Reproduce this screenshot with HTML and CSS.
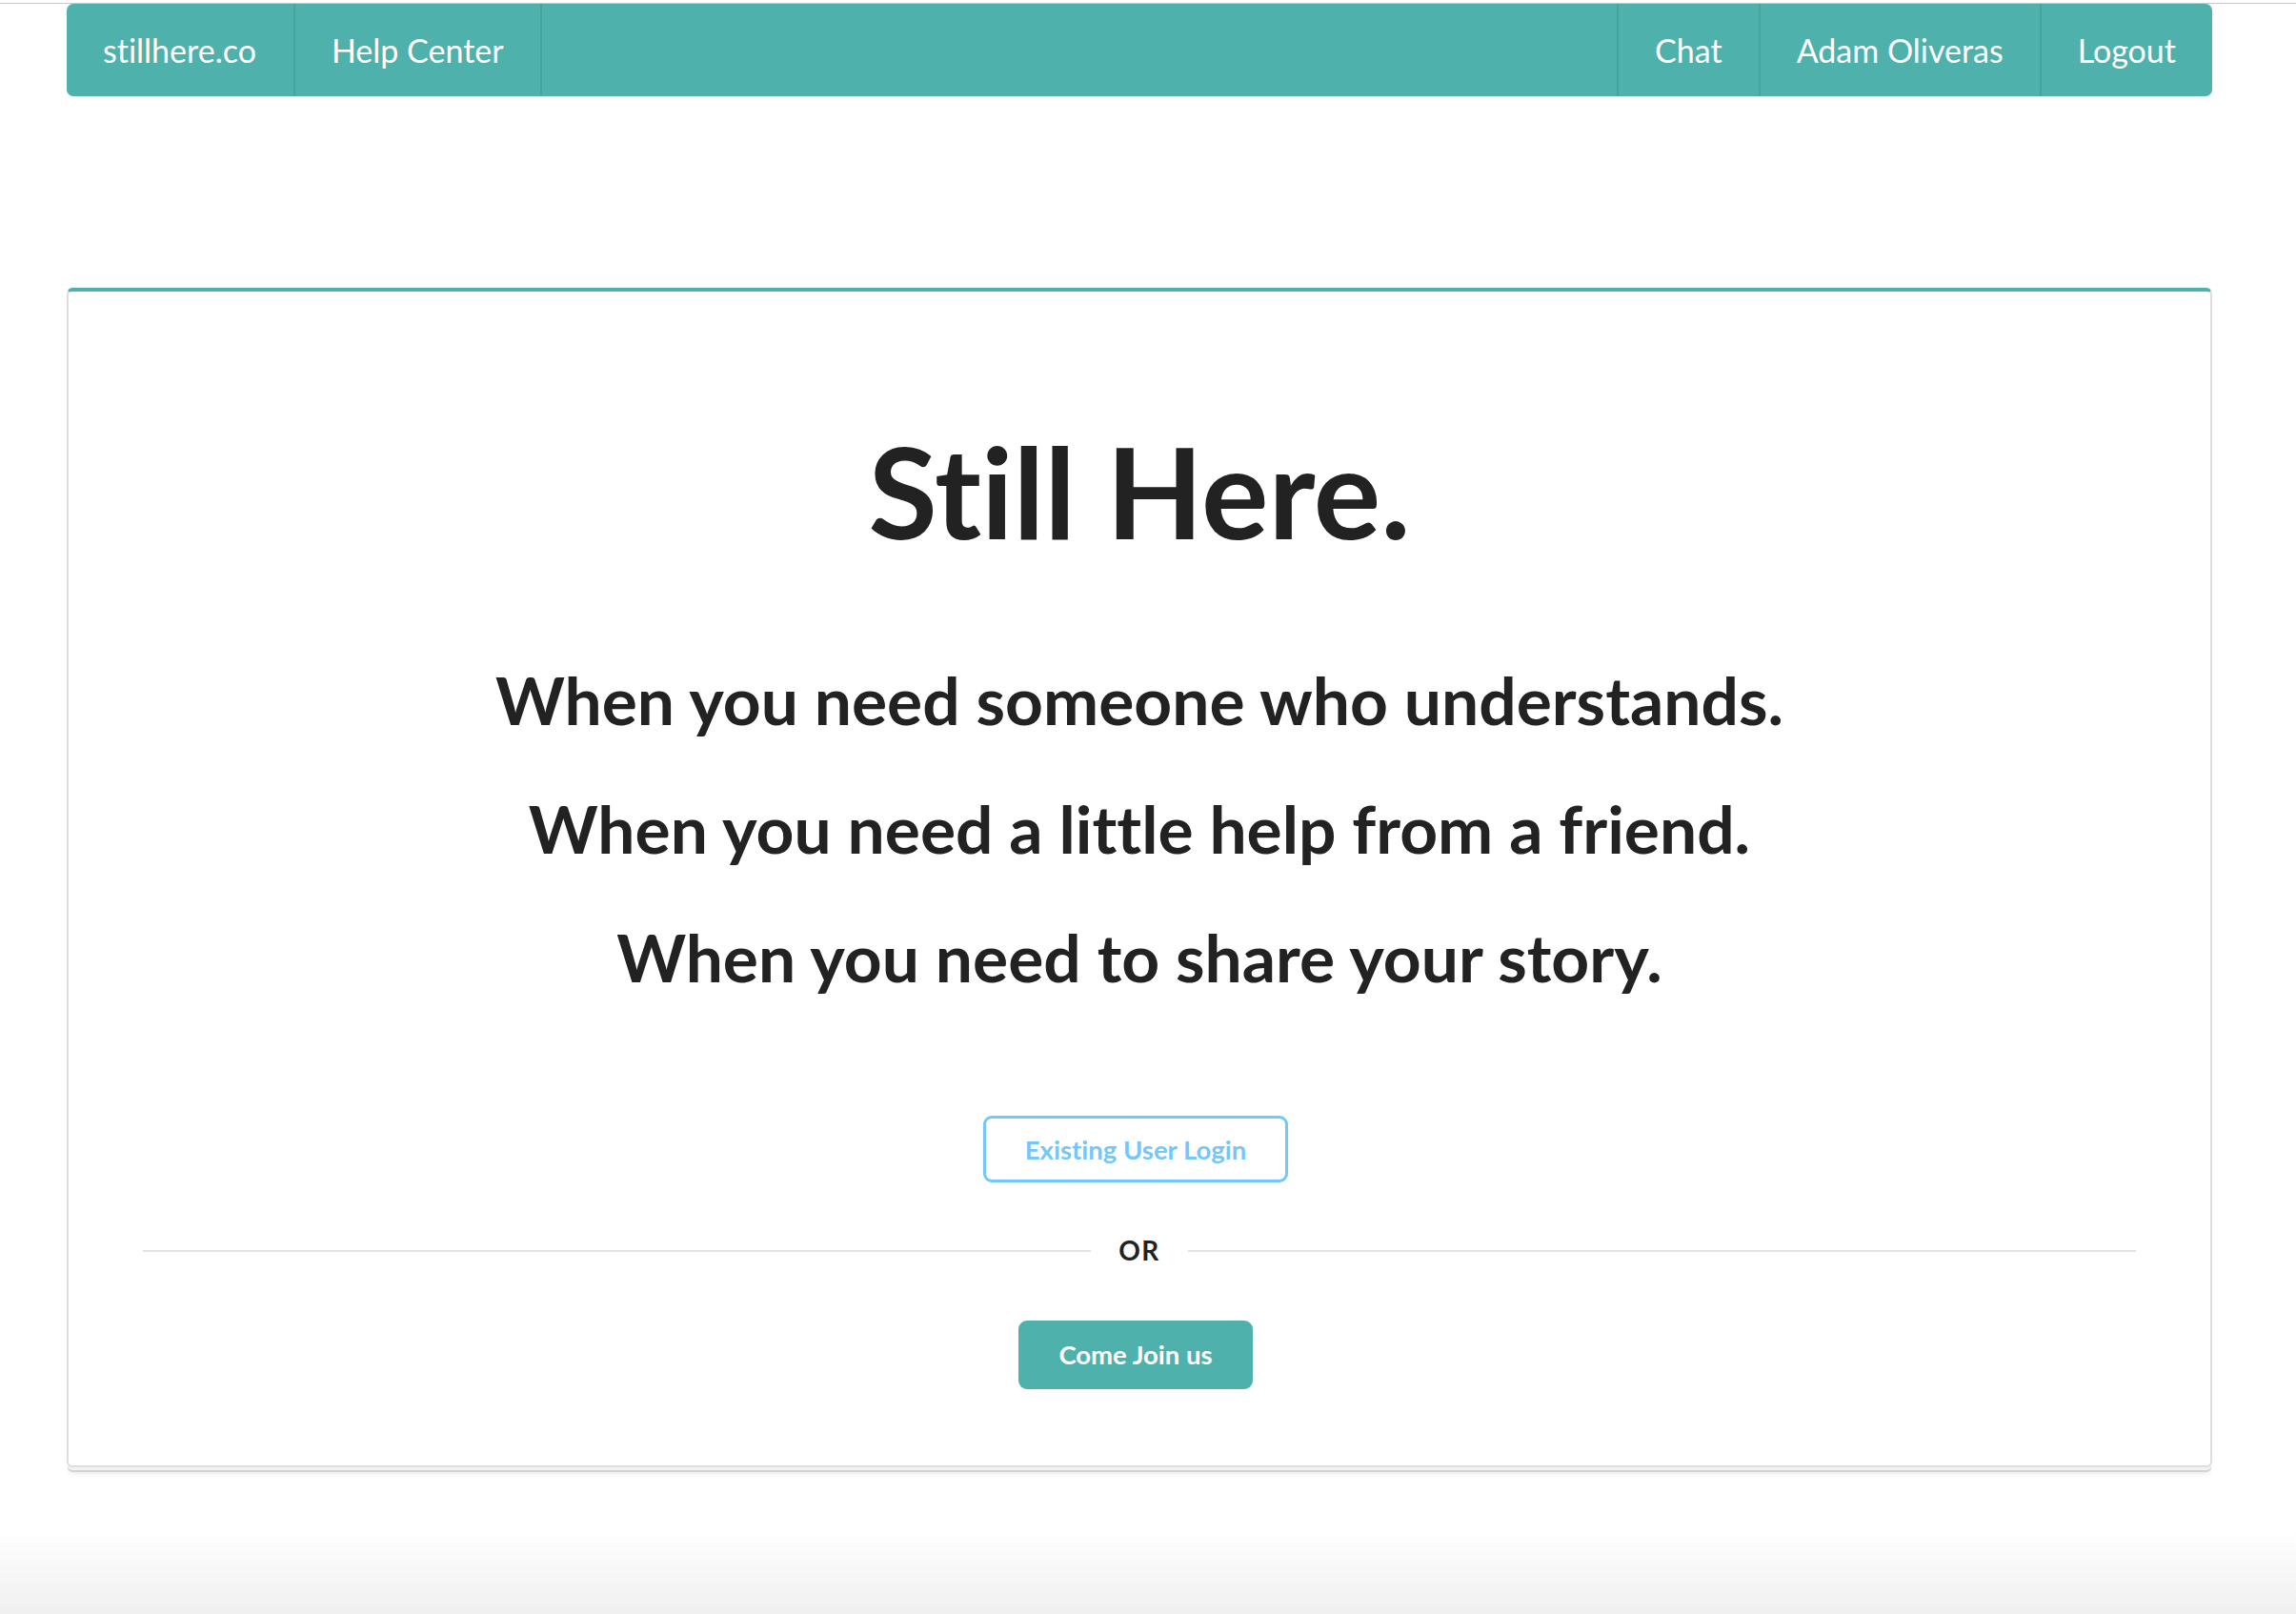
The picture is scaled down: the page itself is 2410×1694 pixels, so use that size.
FILE: index.html
```html
<!DOCTYPE html>
<html lang="en">
<head>
<meta charset="utf-8">
<title>Still Here.</title>
<link rel="stylesheet" href="styles.css">
</head>
<body>
<div class="chrome-line"></div>
<nav class="menu">
  <div class="menu-left">
    <a class="item" href="#">stillhere.co</a>
    <a class="item" href="#">Help Center</a>
  </div>
  <div class="menu-right">
    <a class="item" href="#">Chat</a>
    <a class="item" href="#">Adam Oliveras</a>
    <a class="item" href="#">Logout</a>
  </div>
</nav>
<main class="segment">
  <h1 class="title">Still Here.</h1>
  <div class="taglines">
    <p>When you need someone who understands.</p>
    <p>When you need a little help from a friend.</p>
    <p>When you need to share your story.</p>
  </div>
  <a class="btn btn-basic" href="#">Existing User Login</a>
  <div class="divider"><span>OR</span></div>
  <a class="btn btn-teal" href="#">Come Join us</a>
</main>
</body>
</html>
```
FILE: styles.css
```css
html, body {
  margin: 0;
  padding: 0;
}
body {
  min-height: 1694px;
  font-family: "Lato", "Open Sans", "Liberation Sans", sans-serif;
  font-variant-ligatures: none;
  font-feature-settings: "liga" 0, "clig" 0;
  color: #222222;
  background: linear-gradient(to bottom, #ffffff 0, #ffffff 1605px, #f0f0f0 1694px);
}
.chrome-line {
  height: 3px;
  border-bottom: 1px solid #c6c6c6;
  background: #ffffff;
}
.menu {
  display: flex;
  justify-content: space-between;
  margin-left: 70px;
  width: 2252px;
  height: 97px;
  background: #4fb1ac;
  border-radius: 7px;
}
.menu-left, .menu-right {
  display: flex;
}
.item {
  display: flex;
  align-items: center;
  padding: 0 38px;
  font-size: 34px;
  color: #ffffff;
  text-decoration: none;
}
.menu-left .item {
  border-right: 2px solid #46a39e;
}
.menu-left .item:first-child {
  padding-right: 39px;
}
.menu-right .item {
  border-left: 2px solid #46a39e;
}
.menu-right .item:last-child {
  padding-right: 38px;
}
.segment {
  display: flex;
  flex-direction: column;
  align-items: center;
  margin: 201px 0 0 70px;
  width: 2252px;
  box-sizing: border-box;
  padding: 130px 78px 80px;
  border: 2px solid #dedede;
  border-top: 4px solid #4fb1ac;
  border-radius: 6px;
  background: #ffffff;
  box-shadow:
    0 4px 0 -1px #f2f2f2,
    0 6px 0 -1px #d4d4d5,
    0 9px 5px -2px rgba(0, 0, 0, 0.08);
}
.title {
  margin: 0;
  font-size: 132px;
  line-height: 1.2;
  font-weight: 700;
  color: #222222;
}
.taglines {
  margin-top: 73px;
  text-align: center;
}
.taglines p {
  margin: 0;
  font-size: 69.5px;
  line-height: 135px;
  font-weight: 700;
  color: #222222;
}
.btn {
  display: flex;
  align-items: center;
  justify-content: center;
  box-sizing: border-box;
  font-size: 27.5px;
  font-weight: 700;
  text-decoration: none;
  border-radius: 9px;
  margin-right: 8px;
}
.btn-basic {
  margin-top: 99px;
  height: 70px;
  padding: 0 41px;
  border: 3px solid #73c7fa;
  color: #73c7fa;
  background: #ffffff;
}
.divider {
  display: flex;
  align-items: center;
  align-self: stretch;
  margin-top: 55px;
  font-size: 28px;
  line-height: 1.2;
  font-weight: 700;
  letter-spacing: 1.5px;
  color: #222222;
}
.divider::before, .divider::after {
  content: "";
  flex: 1;
  height: 2px;
  background: #e3e3e3;
}
.divider span {
  padding: 0 29px;
}
.btn-teal {
  margin-top: 56px;
  height: 72px;
  padding: 0 42px;
  color: #ffffff;
  background: #4fb1ac;
}
```
